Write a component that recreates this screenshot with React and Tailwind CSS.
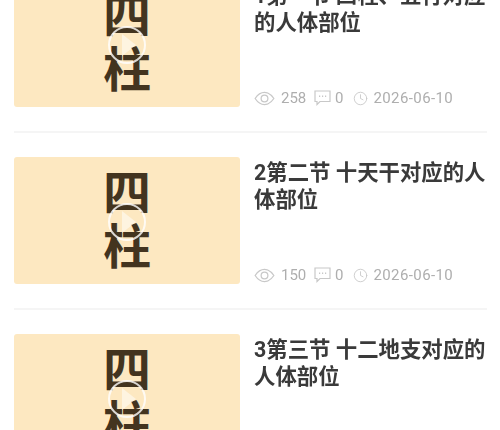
import { Clock } from 'lucide-react';

const lessons = [
  { title: '1第一节 四柱、五行对应的人体部位', views: 258, comments: 0, date: '2026-06-10' },
  { title: '2第二节 十天干对应的人体部位', views: 150, comments: 0, date: '2026-06-10' },
  { title: '3第三节 十二地支对应的人体部位', views: 96, comments: 0, date: '2026-06-10' },
];

function EyeIcon() {
  return (
    <svg width="21" height="15" viewBox="0 0 22 16" fill="none" stroke="#c8c8c8" strokeWidth="1.300">
      <path d="M1 8C4 3.500 7.200 1.500 11 1.500S18 3.500 21 8c-3 4.500-6.200 6.500-10 6.500S4 12.500 1 8Z" />
      <circle cx="11" cy="8" r="3.600" />
    </svg>
  );
}

function CommentIcon() {
  return (
    <svg width="17" height="16" viewBox="0 0 17 16" fill="none" stroke="#c8c8c8" strokeWidth="1.200">
      <path d="M1 1h15v10.500H6L3 14.500v-3H1Z" />
      <path d="M5 6.200h1.200M8 6.200h1.200M11 6.200h1.200" strokeWidth="1.500" />
    </svg>
  );
}

function Thumb() {
  return (
    <div className="relative flex h-[127px] w-[226px] shrink-0 flex-col items-center justify-center rounded-[3px] bg-[#fde8c1] text-[48px] font-bold leading-[54px] text-[#43341f]">
      <span>四</span>
      <span>柱</span>
      {/* play overlay */}
      <div className="absolute left-1/2 top-1/2 flex h-[38px] w-[38px] -translate-x-1/2 -translate-y-[18px] items-center justify-center rounded-full border-2 border-white/80">
        <div className="ml-[3px] h-0 w-0 border-y-[11px] border-l-[14px] border-y-transparent border-l-white/50" />
      </div>
    </div>
  );
}

function LessonRow({ lesson }) {
  return (
    <div className="flex gap-[14px] border-b-2 border-[#f5f5f5] py-6">
      <Thumb />
      <div className="-mb-[1px] flex min-w-0 flex-1 flex-col justify-between pt-[2px]">
        <h3 className="text-[21.4px] font-bold leading-[27px] text-[#3a3a3a]">{lesson.title}</h3>
        <div className="flex items-center text-[15px] leading-5 text-[#aeaeae]">
          <EyeIcon />
          <span className="ml-[6px] w-[25px]">{lesson.views}</span>
          <span className="ml-[8px]"><CommentIcon /></span>
          <span className="ml-[4px]">{lesson.comments}</span>
          <Clock className="ml-[10px]" size={15} color="#c8c8c8" strokeWidth={1.400} />
          <span className="ml-[5px] tracking-[0.4px]">{lesson.date}</span>
        </div>
      </div>
    </div>
  );
}

export default function App() {
  return (
    <div className="h-[430px] w-[500px] overflow-hidden bg-white font-['Roboto','Noto_Sans_CJK_SC',sans-serif]">
      <div className="-mt-[44px] ml-[14px] mr-[13px] blur-[0.4px]">
        {lessons.map((lesson) => (
          <LessonRow key={lesson.title} lesson={lesson} />
        ))}
      </div>
    </div>
  );
}
